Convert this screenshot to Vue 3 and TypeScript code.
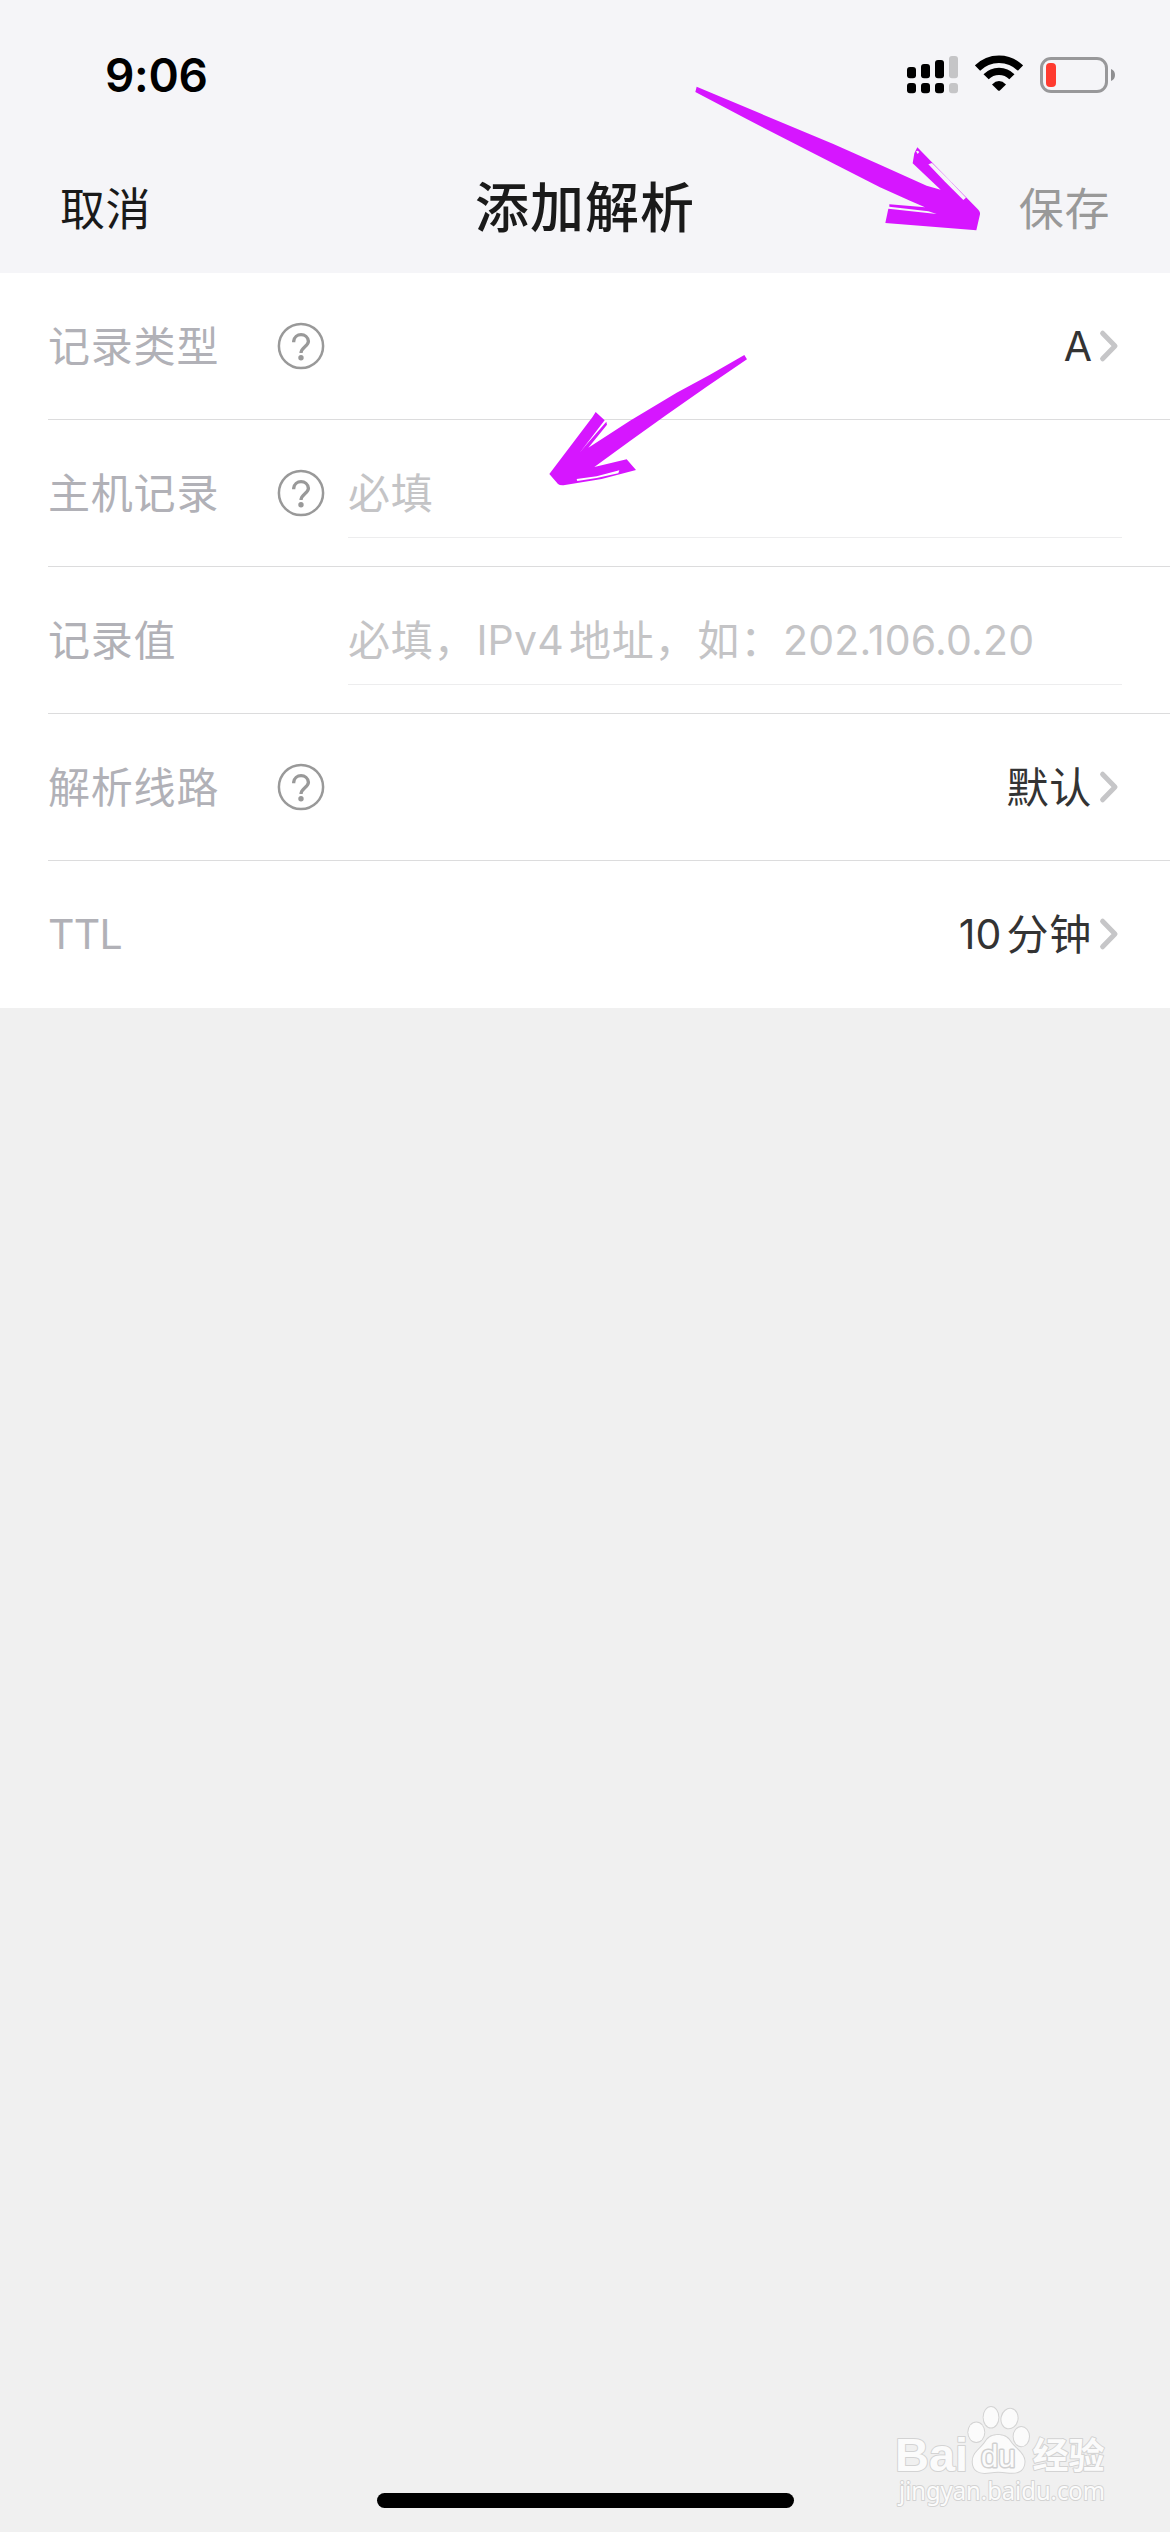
<script setup lang="ts">
interface TextPart {
  text: string
  kind: 'cjk' | 'latin'
}

interface FormRow {
  label: string
  latinLabel?: boolean
  help: boolean
  placeholder?: TextPart[]
  value?: TextPart[]
}

const rows: FormRow[] = [
  { label: '记录类型', help: true, value: [{ text: 'A', kind: 'latin' }] },
  { label: '主机记录', help: true, placeholder: [{ text: '必填', kind: 'cjk' }] },
  {
    label: '记录值',
    help: false,
    placeholder: [
      { text: '必填，', kind: 'cjk' },
      { text: 'IPv4', kind: 'latin' },
      { text: '地址，如：', kind: 'cjk' },
      { text: '202.106.0.20', kind: 'latin' },
    ],
  },
  { label: '解析线路', help: true, value: [{ text: '默认', kind: 'cjk' }] },
  {
    label: 'TTL',
    latinLabel: true,
    help: false,
    value: [
      { text: '10', kind: 'latin' },
      { text: '分钟', kind: 'cjk' },
    ],
  },
]

const signalBars = [
  { x: 0, y: 11, off: false },
  { x: 14, y: 8, off: false },
  { x: 28, y: 4, off: false },
  { x: 42, y: 0, off: true },
]
</script>

<template>
  <div class="screen">
    <header class="top">
      <div class="status">
        <span class="time">9:06</span>
        <div class="indicators">
          <svg class="signal" width="51" height="38" viewBox="0 0 51 38">
            <g v-for="bar in signalBars" :key="bar.x" :fill="bar.off ? '#c5c5c7' : '#000'">
              <rect :x="bar.x" :y="bar.y" width="9" :height="22.3 - bar.y" rx="3" />
              <rect :x="bar.x" y="27" width="9" height="10.3" rx="3" />
            </g>
          </svg>
          <svg class="wifi" width="48" height="37" viewBox="0 0 48 37">
            <g fill="none" stroke="#000">
              <path d="M2.5 13.1A30.4 30.4 0 0 1 45.5 13.1" stroke-width="7.4" />
              <path d="M11.1 21.8A17.9 17.9 0 0 1 36.9 21.8" stroke-width="7.2" />
            </g>
            <path d="M17 29.4Q24 22.8 31 29.4L24.9 35.4Q24 36.2 23.1 35.4Z" />
          </svg>
          <svg class="battery" width="76" height="36" viewBox="0 0 76 36">
            <rect x="1.5" y="1.5" width="65" height="33" rx="9.5" fill="none" stroke="#98989a" stroke-width="3" />
            <rect x="6" y="6" width="10" height="24" rx="4" fill="#ff3b30" />
            <path d="M71 12Q75 13.5 75 18T71 24Z" fill="#8f8f91" />
          </svg>
        </div>
      </div>
      <nav class="nav">
        <span class="action">取消</span>
        <h1 class="title">添加解析</h1>
        <span class="action save">保存</span>
      </nav>
    </header>

    <main class="form">
      <div v-for="row in rows" :key="row.label" class="row">
        <div class="row-body">
          <span class="label" :class="{ 'label-latin': row.latinLabel }">{{ row.label }}</span>
          <svg v-if="row.help" class="help" width="48" height="48" viewBox="-24 -24 48 48">
            <circle r="22.1" fill="none" stroke="#999" stroke-width="2.5" />
            <path
              d="M-7.3 -3.8V-4.8A7.4 7.4 0 0 1 7.4 -4.8C7.4 0.3 0 1.2 0 7"
              fill="none"
              stroke="#999"
              stroke-width="3.3"
            />
            <circle cy="11.7" r="2.7" fill="#999" />
          </svg>
          <div v-if="row.placeholder" class="field">
            <span v-for="part in row.placeholder" :key="part.text" :class="part.kind">{{ part.text }}</span>
          </div>
          <div v-if="row.value" class="value">
            <span v-for="part in row.value" :key="part.text" :class="part.kind">{{ part.text }}</span>
            <svg class="chevron" width="20" height="34" viewBox="0 0 20 34">
              <path
                d="M3.6 4.2L16 17L3.6 29.8"
                fill="none"
                stroke="#c6c6c8"
                stroke-width="5"
                stroke-linecap="round"
                stroke-linejoin="round"
              />
            </svg>
          </div>
        </div>
      </div>
    </main>

    <footer class="bottom">
      <svg class="watermark" width="224" height="118" viewBox="0 0 224 118">
        <g class="mark">
          <text x="5" y="70.7" class="bai">Bai</text>
          <ellipse cx="86.3" cy="32.3" rx="8" ry="9.8" />
          <ellipse cx="101" cy="17.3" rx="7.4" ry="10.3" />
          <ellipse cx="119.5" cy="18.6" rx="8" ry="9.8" transform="rotate(12 119.5 18.6)" />
          <ellipse cx="131.3" cy="36.6" rx="7.7" ry="9.6" />
          <path
            d="M96 41C101 33 115 33 120 41C124 48 135 53 134.500 62C134 72 127 73.500 117 72.500Q108 71 100 72.500C88 74.500 83 70 82.700 62C82.500 52 91 49 96 41Z"
          />
          <text x="91" y="66.5" class="du">du</text>
          <text x="142.5" y="68.5" class="jy">经验</text>
          <text x="9" y="99.5" class="url" textLength="206" lengthAdjust="spacingAndGlyphs">jingyan.baidu.com</text>
        </g>
      </svg>
      <div class="home-bar"></div>
    </footer>

    <svg class="annotations" width="1170" height="600" viewBox="0 0 1170 600">
      <g fill="#d616ff" fill-rule="evenodd">
        <path
          transform="translate(680 70) scale(.33333)"
          d="M50 50L240 130L460 222L600 284L740 347L782 359L698 280L703 250L712 232L895 419Q901 426 900 433L889 481L616 459L625 416L770 432L745 424L628 410V403L735 412L690 392L600 352L400 250L200 147L46 66ZM745 283L756 279L805 328L858 383L850 390L795 335ZM708 244L713 252L718 246L713 242Z"
        />
        <path
          transform="translate(330 330) scale(.33333)"
          d="M1243 75L1140 134L1040 188L900 272L775 353L831 284L829 275L765 349L748 370L824 271L797 246L787 262L658 432L684 462Q690 467 705 465L815 447L918 420L890 388L793 411L900 333L1010 254L1130 170L1251 88ZM740 447L800 439L868 421L865 430L800 444L742 453Z"
        />
      </g>
    </svg>
  </div>
</template>

<style>
body {
  margin: 0;
}
</style>

<style scoped>
.screen {
  position: relative;
  display: flex;
  flex-direction: column;
  width: 1170px;
  height: 2532px;
  overflow: hidden;
  background: #f0f0f0;
  font-family: 'Inter', 'Noto Sans CJK SC', sans-serif;
  color: #333;
}

.top {
  display: flex;
  flex-direction: column;
  height: 273px;
  background: #f5f5f8;
}

.status {
  display: flex;
  align-items: center;
  justify-content: space-between;
  height: 149px;
  padding: 0 54px 0 105px;
}

.time {
  font-size: 46px;
  font-weight: 600;
  line-height: 56px;
  letter-spacing: -0.3px;
  color: #000;
}

.indicators {
  display: flex;
  align-items: center;
}

.wifi {
  margin-left: 17px;
  margin-top: -2px;
}

.battery {
  margin-left: 17px;
}

.nav {
  display: grid;
  grid-template-columns: 1fr auto 1fr;
  align-items: center;
  height: 118px;
  padding: 0 60px;
  font-family: 'Noto Sans CJK SC', sans-serif;
  color: #1a1a1a;
}

.action {
  padding-bottom: 2px;
  font-size: 45px;
  line-height: 60px;
  letter-spacing: 0.6px;
}

.save {
  justify-self: end;
  color: #999;
}

.title {
  margin: 0;
  padding: 0 0 6px;
  font-size: 54px;
  font-weight: 500;
  line-height: 72px;
  letter-spacing: 1px;
}

.form {
  height: 735px;
  background: #fff;
}

.row {
  height: 147px;
  padding-left: 48px;
}

.row-body {
  display: flex;
  align-items: center;
  box-sizing: border-box;
  height: 147px;
  padding-right: 48px;
  border-bottom: 1px solid #dcdcdd;
}

.row:last-child .row-body {
  border-bottom-color: transparent;
}

.label {
  width: 229px;
  padding-bottom: 4px;
  font-family: 'Noto Sans CJK SC', sans-serif;
  font-size: 42px;
  line-height: 60px;
  letter-spacing: 0.8px;
  color: #b1b1b7;
}

.label-latin {
  padding-bottom: 0;
  font-family: 'Inter', sans-serif;
  font-size: 41px;
  letter-spacing: -0.7px;
}

.help + .field {
  margin-left: 23px;
}

.label + .field {
  margin-left: 71px;
}

.field {
  display: flex;
  align-items: center;
  box-sizing: border-box;
  width: 774px;
  height: 90px;
  border-bottom: 1px solid #ededee;
  color: #c4c4c6;
}

.cjk {
  padding-bottom: 4px;
  font-family: 'Noto Sans CJK SC', sans-serif;
  font-size: 42px;
  line-height: 60px;
  letter-spacing: 0.8px;
}

.latin {
  font-size: 41px;
  line-height: 60px;
}

.field .latin {
  letter-spacing: 0.2px;
}

.latin + .cjk {
  margin-left: 5px;
}

.value {
  display: flex;
  align-items: center;
  margin-left: auto;
}

.chevron {
  margin-left: 7px;
  margin-right: 3px;
}

.bottom {
  display: flex;
  flex: 1;
  flex-direction: column;
  align-items: center;
  justify-content: flex-end;
  padding-bottom: 24px;
}

.watermark {
  align-self: flex-end;
  margin-right: 56px;
  margin-bottom: -25px;
  overflow: visible;
}

.mark {
  fill: #fbfbfb;
  stroke: #d3d3d3;
  stroke-width: 2px;
  stroke-linejoin: round;
  paint-order: stroke;
}

.bai {
  font: 700 47px 'Liberation Sans', sans-serif;
}

.du {
  font: 400 31px 'Liberation Sans', sans-serif;
  stroke: #d0d0d0;
  stroke-width: 3px;
}

.jy {
  font: 700 36px 'Noto Sans CJK SC', sans-serif;
}

.url {
  font: 400 26px 'Noto Sans', sans-serif;
}

.home-bar {
  width: 417px;
  height: 15px;
  border-radius: 8px;
  background: #000;
}

.annotations {
  position: absolute;
  top: 0;
  left: 0;
}
</style>
